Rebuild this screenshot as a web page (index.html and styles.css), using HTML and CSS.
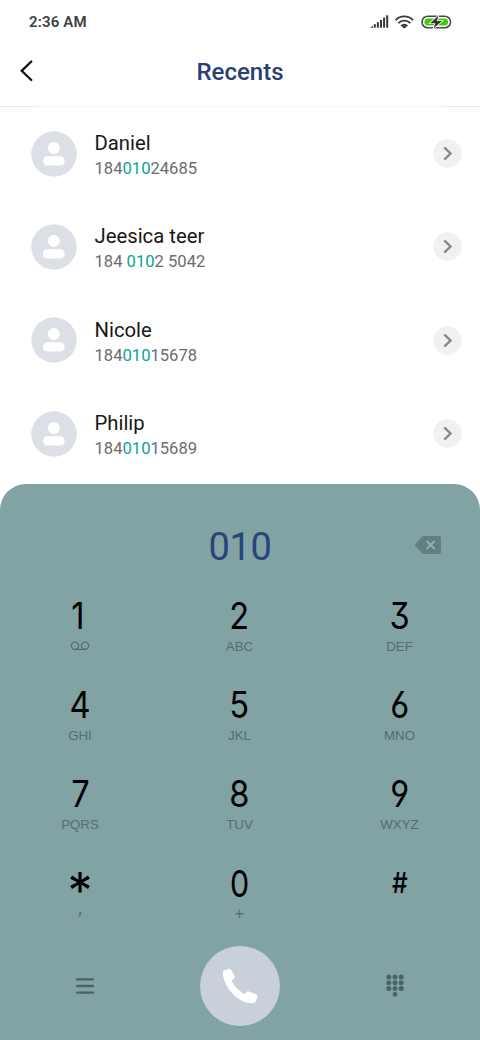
FILE: index.html
```html
<!DOCTYPE html>
<html lang="en">
<head>
<meta charset="utf-8">
<title>Recents</title>
<link rel="stylesheet" href="styles.css">
</head>
<body>
<main class="phone">
  <div class="status">
    <span class="clock">2:36 AM</span>
    <svg class="status-icons" width="82" height="16" viewBox="0 0 82 16">
      <g fill="#363a3a">
        <path d="M0 12.7l3-2v2z"/><rect x="3.8" y="9.2" width="2" height="3.5"/><rect x="6.9" y="7.2" width="2" height="5.5"/><rect x="10" y="4.9" width="2" height="7.8"/><rect x="13.1" y="2.5" width="2" height="10.2"/><rect x="16.2" y="0.3" width="2" height="12.4"/>
      </g>
      <path d="M25.5 5.1a12.2 12.2 0 0 1 17.6 0M28.3 8.2a8.3 8.3 0 0 1 12 0M31.2 11.1a4.3 4.3 0 0 1 6.2 0" fill="none" stroke="#363a3a" stroke-width="1.9"/>
      <path d="M31.9 11.7q2.4-1.8 4.8 0l-2.4 1.9z" fill="#363a3a"/>
      <rect x="52" y="1.2" width="28.5" height="11.6" rx="5.8" fill="#fff" stroke="#444b44" stroke-width="1.6"/>
      <rect x="54.4" y="3.4" width="23.7" height="7.2" rx="3.6" fill="#43c80d"/>
      <path d="M68.4 0.6l-8.2 7.6h5l-1.6 5.2 8.4-7.4h-5l1.4-5.4z" fill="#363a3a" stroke="#fff" stroke-width="1.6" paint-order="stroke"/>
    </svg>
  </div>
  <header class="header">
    <svg class="back" width="16" height="24" viewBox="0 0 16 24"><path d="M12.3 2.5L2.7 11.8l9.6 9.2" fill="none" stroke="#111" stroke-width="2.3" stroke-linecap="round"/></svg>
    <h1 class="title">Recents</h1>
  </header>
  <section class="contacts">
    <div class="contact">
      <svg class="avatar" viewBox="0 0 46 46"><circle cx="23" cy="23" r="22.7" fill="#dcdfe5"/><circle cx="22.8" cy="17" r="6" fill="#fff"/><rect x="12" y="25.3" width="21.7" height="9.2" rx="4.5" fill="#fff"/></svg>
      <div class="info"><div class="name">Daniel</div><div class="number">184<em>010</em>24685</div></div>
      <svg class="go" viewBox="0 0 29 29"><circle cx="14.5" cy="14.5" r="14.2" fill="#f1f1f1"/><path d="M12 9.2l5.5 5.3-5.5 5.3" fill="none" stroke="#888" stroke-width="2.4" stroke-linecap="round"/></svg>
    </div>
    <div class="contact">
      <svg class="avatar" viewBox="0 0 46 46"><circle cx="23" cy="23" r="22.7" fill="#dcdfe5"/><circle cx="22.8" cy="17" r="6" fill="#fff"/><rect x="12" y="25.3" width="21.7" height="9.2" rx="4.5" fill="#fff"/></svg>
      <div class="info"><div class="name">Jeesica teer</div><div class="number">184 <em>010</em>2 5042</div></div>
      <svg class="go" viewBox="0 0 29 29"><circle cx="14.5" cy="14.5" r="14.2" fill="#f1f1f1"/><path d="M12 9.2l5.5 5.3-5.5 5.3" fill="none" stroke="#888" stroke-width="2.4" stroke-linecap="round"/></svg>
    </div>
    <div class="contact">
      <svg class="avatar" viewBox="0 0 46 46"><circle cx="23" cy="23" r="22.7" fill="#dcdfe5"/><circle cx="22.8" cy="17" r="6" fill="#fff"/><rect x="12" y="25.3" width="21.7" height="9.2" rx="4.5" fill="#fff"/></svg>
      <div class="info"><div class="name">Nicole</div><div class="number">184<em>010</em>15678</div></div>
      <svg class="go" viewBox="0 0 29 29"><circle cx="14.5" cy="14.5" r="14.2" fill="#f1f1f1"/><path d="M12 9.2l5.5 5.3-5.5 5.3" fill="none" stroke="#888" stroke-width="2.4" stroke-linecap="round"/></svg>
    </div>
    <div class="contact">
      <svg class="avatar" viewBox="0 0 46 46"><circle cx="23" cy="23" r="22.7" fill="#dcdfe5"/><circle cx="22.8" cy="17" r="6" fill="#fff"/><rect x="12" y="25.3" width="21.7" height="9.2" rx="4.5" fill="#fff"/></svg>
      <div class="info"><div class="name">Philip</div><div class="number">184<em>010</em>15689</div></div>
      <svg class="go" viewBox="0 0 29 29"><circle cx="14.5" cy="14.5" r="14.2" fill="#f1f1f1"/><path d="M12 9.2l5.5 5.3-5.5 5.3" fill="none" stroke="#888" stroke-width="2.4" stroke-linecap="round"/></svg>
    </div>
  </section>
  <section class="dialer">
    <div class="entry">
      <span></span>
      <span class="typed">010</span>
      <svg class="erase" width="27" height="20" viewBox="0 0 27 20"><path d="M8.5 1H24a2 2 0 0 1 2 2v14a2 2 0 0 1-2 2H8.5a2 2 0 0 1-1.5-.7L.6 11.2a2 2 0 0 1 0-2.4L7 1.7A2 2 0 0 1 8.5 1z" fill="#617f7f"/><path d="M11.7 6l8 8m0-8l-8 8" stroke="#91b0b1" stroke-width="2"/></svg>
    </div>
    <div class="keys">
      <div class="key"><span class="digit one">1</span><svg class="voicemail" width="20" height="14" viewBox="0 0 20 14"><g fill="none" stroke="#526d6d" stroke-width="1.2"><circle cx="5" cy="5.8" r="3.6"/><circle cx="15" cy="5.8" r="3.6"/><path d="M5 9.4h10"/></g></svg></div>
      <div class="key"><span class="digit">2</span><span class="letters">ABC</span></div>
      <div class="key"><span class="digit">3</span><span class="letters">DEF</span></div>
      <div class="key"><span class="digit">4</span><span class="letters">GHI</span></div>
      <div class="key"><span class="digit">5</span><span class="letters">JKL</span></div>
      <div class="key"><span class="digit">6</span><span class="letters">MNO</span></div>
      <div class="key"><span class="digit">7</span><span class="letters">PQRS</span></div>
      <div class="key"><span class="digit">8</span><span class="letters">TUV</span></div>
      <div class="key"><span class="digit">9</span><span class="letters">WXYZ</span></div>
      <div class="key"><span class="digit star">*</span><span class="letters comma">,</span></div>
      <div class="key"><span class="digit zero">0</span><span class="letters plus">+</span></div>
      <div class="key"><span class="digit hash">#</span></div>
    </div>
    <div class="actions">
      <svg width="20" height="18" viewBox="0 0 20 18"><path d="M2 2.3h16M2 9h16M2 15.6h16" stroke="#4b6363" stroke-width="2.3" stroke-linecap="round"/></svg>
      <svg class="call" width="80" height="80" viewBox="0 0 81 81"><circle cx="40.5" cy="40.5" r="40.5" fill="#c8d0d9"/><path d="M25.2 24.5l4-1.4a2.1 2.1 0 0 1 2.5 1l3.2 6.1a2.2 2.2 0 0 1-.3 2.4l-2.5 3a41 41 0 0 0 12.5 13.2l2.7-2.4a2.2 2.2 0 0 1 2.2-.4l7.3 3a2.1 2.1 0 0 1 1.2 2.6l-1.5 4.3a2.7 2.7 0 0 1-2.2 1.8C41 60 23 42 23.2 27a2.7 2.7 0 0 1 2-2.5z" fill="#fff"/></svg>
      <svg width="20" height="24" viewBox="0 0 20 24"><g fill="#4b6363"><circle cx="3.8" cy="3.1" r="2.5"/><circle cx="10" cy="3.1" r="2.5"/><circle cx="16.2" cy="3.1" r="2.5"/><circle cx="3.8" cy="8.8" r="2.5"/><circle cx="10" cy="8.8" r="2.5"/><circle cx="16.2" cy="8.8" r="2.5"/><circle cx="3.8" cy="14.5" r="2.5"/><circle cx="10" cy="14.5" r="2.5"/><circle cx="16.2" cy="14.5" r="2.5"/><circle cx="10" cy="20.3" r="2.4"/></g></svg>
    </div>
  </section>
</main>
</body>
</html>
```
FILE: styles.css
```css
* { box-sizing: border-box; }
body { margin: 0; background: #fff; font-family: Roboto, sans-serif; }
svg { display: block; flex: none; }
.phone { width: 480px; height: 1040px; display: flex; flex-direction: column; overflow: hidden; }
.status { height: 44px; padding: 0 28px 0 29px; display: flex; justify-content: space-between; align-items: center; }
.clock { font-size: 15px; font-weight: 600; color: #404040; letter-spacing: .15px; }
.status-icons { margin-top: 2px; }
.header { height: 63px; display: grid; grid-template-columns: 60px 1fr 60px; align-items: center; padding-bottom: 7px;
  background: linear-gradient(90deg, #e9e9e9 38px, #f6f6f6 38px, #f6f6f6 442px, #e9e9e9 442px) 0 62px / 100% 1px no-repeat; }
.back { margin: 0 0 3px 19px; }
.title { margin: 0; text-align: center; font-size: 24px; line-height: 28px; font-weight: 500; color: #2a4075; }
.contacts { height: 377px; }
.contact { height: 93.3px; display: flex; align-items: center; padding: 0 18px 0 31px; }
.avatar { width: 46px; height: 46px; }
.info { margin-left: 17.5px; flex: 1; padding-top: 4px; }
.name { font-size: 20.3px; line-height: 26px; color: #171717; }
.number { font-size: 16.6px; line-height: 25px; color: #6c6c6c; }
.number em { font-style: normal; color: #08a39a; }
.go { width: 29px; height: 29px; }
.dialer { height: 556px; background: #81a3a4; border-radius: 26px 26px 0 0; }
.entry { height: 95px; padding: 28px 38px 0 0; display: grid; grid-template-columns: 160px 160px 1fr; align-items: center; }
.typed { padding-top: 2px; text-align: center; font-size: 38px; letter-spacing: -.4px; line-height: 44px; color: #2a4378; }
.erase { justify-self: end; margin-bottom: 1px; }
.keys { height: 367px; display: grid; grid-template-columns: 160px 159px 161px; grid-auto-rows: 89px; padding-top: 15px; }
.key { display: flex; flex-direction: column; align-items: center; }
.digit { height: 44px; line-height: 44px; font-family: Inter, sans-serif; font-size: 37px; font-weight: 400; color: #000; transform: scaleX(.88); font-feature-settings: "cv03", "cv04", "cv09"; }
.one { padding-right: 4px; }
.star { padding-top: 8px; font-size: 50px; font-weight: 400; transform: none; }
.hash { font-size: 28px; font-weight: 500; line-height: 44px; }
.zero { padding-top: 1px; transform: scaleX(.82); }
.letters { height: 14px; margin-top: 2px; font: 13.3px/14px "Liberation Sans", sans-serif; color: #526d6d; }
.plus { font-size: 17px; }
.comma { font: 18px/1px Roboto, sans-serif; }
.voicemail { margin-top: 2px; }
.actions { height: 79px; padding: 0 75px; display: flex; align-items: center; justify-content: space-between; }
```
